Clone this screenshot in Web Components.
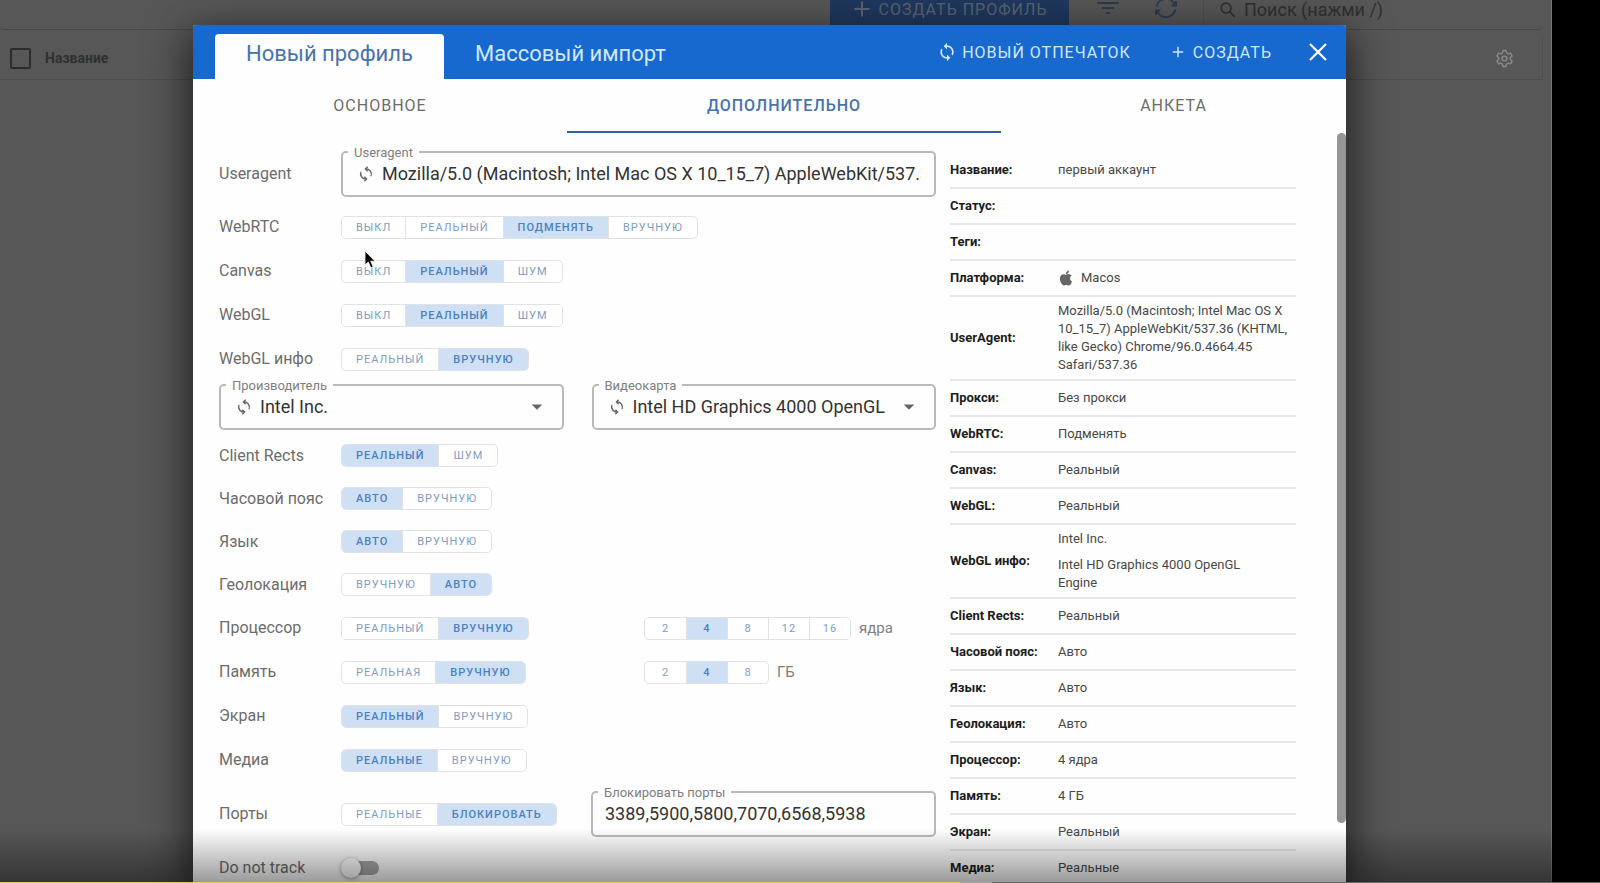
<!DOCTYPE html>
<html lang="ru">
<head>
<meta charset="utf-8">
<meta name="viewport" content="width=device-width, initial-scale=1">
<title>Новый профиль</title>
<style>
  html, body { margin: 0; height: 100%; overflow: hidden; background: #000; }
  body { font-family: Roboto, "Liberation Sans", sans-serif; font-size: 16px; color: #333; }
</style>
</head>
<body>
<profile-app></profile-app>

<script>
const define = (name, html, setup) => {
  const tpl = document.createElement('template');
  tpl.innerHTML = html;
  customElements.define(name, class extends HTMLElement {
    constructor() {
      super();
      this.attachShadow({ mode: 'open' }).append(tpl.content.cloneNode(true));
    }
    connectedCallback() {
      if (setup && !this.ready) { this.ready = true; setup(this, this.shadowRoot); }
    }
  });
};

/* Icons */
const ICONS = {
  plus: '<path d="M12 3v18M3 12h18" fill="none" stroke="currentColor" stroke-width="2.4"/>',
  close: '<path d="M4 4l16 16M20 4L4 20" fill="none" stroke="currentColor" stroke-width="2.2"/>',
  filter: '<path d="M1 7h22M6 12h12M10 17h4" fill="none" stroke="currentColor" stroke-width="2"/>',
  sync: '<path d="M12 4V1L8 5l4 4V6c3.31 0 6 2.69 6 6 0 1.01-.25 1.97-.7 2.8l1.46 1.46C19.54 15.03 20 13.57 20 12c0-4.42-3.58-8-8-8zm0 14c-3.31 0-6-2.69-6-6 0-1.01.25-1.97.7-2.8L5.24 7.74C4.46 8.97 4 10.43 4 12c0 4.42 3.58 8 8 8v3l4-4-4-4v3z" fill="currentColor"/>',
  reload: '<path d="M2.5 10.5A9.7 9.7 0 0 1 21 9M21.500 13.500A9.700 9.700 0 0 1 3 15M17.500 9.500H22V5M6.500 14.500H2V19" fill="none" stroke="currentColor" stroke-width="2"/>',
  rotate: '<path d="M11 4.500A8 8 0 0 1 19.500 15.500M13 19.500A8 8 0 0 1 4.500 8.500M14.500 1L11 4.500 14.500 8M9.500 16L13 19.500 9.500 23" fill="none" stroke="currentColor" stroke-width="2"/>',
  search: '<circle cx="10" cy="10" r="7" fill="none" stroke="currentColor" stroke-width="2.200"/><path d="M15 15l7 7" stroke="currentColor" stroke-width="2.200"/>',
  gear: '<path d="M10 2h4l.6 3 2 1.200 2.900-1 2 3.500L19.200 11v2l2.300 2.300-2 3.500-2.900-1-2 1.200-.6 3h-4l-.6-3-2-1.200-2.900 1-2-3.500L4.800 13v-2L2.500 8.700l2-3.500 2.900 1 2-1.200z" fill="none" stroke="currentColor" stroke-width="1.800" stroke-linejoin="round"/><circle cx="12" cy="12" r="3" fill="none" stroke="currentColor" stroke-width="1.800"/>',
  caret: '<path d="M5 8.500h14l-7 7z" fill="currentColor"/>',
  apple: '<path d="M18.710 19.500c-.83 1.240-1.710 2.450-3.050 2.470-1.340.030-1.770-.79-3.290-.79-1.530 0-2 .770-3.270.820-1.310.050-2.300-1.320-3.140-2.530C4.250 17 2.940 12.450 4.700 9.390c.87-1.520 2.430-2.480 4.120-2.510 1.280-.020 2.500.870 3.290.870.780 0 2.260-1.070 3.810-.91.650.030 2.470.260 3.640 1.980-.09.060-2.170 1.280-2.150 3.810.030 3.020 2.650 4.030 2.680 4.040-.030.070-.420 1.440-1.380 2.830M13 3.500c.73-.83 1.940-1.460 2.940-1.500.13 1.170-.34 2.350-1.040 3.190-.690.850-1.830 1.510-2.950 1.420-.150-1.150.410-2.350 1.050-3.110z" fill="currentColor"/>'
};
define('ui-icon', `
  <style>
    :host { display: inline-flex; flex: none; width: 16px; height: 16px; }
    svg { width: 100%; height: 100%; }
  </style>
  <svg viewBox="0 0 24 24" aria-hidden="true"></svg>`,
  (el, root) => { root.querySelector('svg').innerHTML = ICONS[el.getAttribute('name')]; });

/* Toolbar and list header under the dialog */
define('list-toolbar', `
  <style>
    :host { display: flex; align-items: flex-end; height: 29px; margin-right: 8px; color: #303030;
            border-bottom: 1px solid #484848; border-radius: 0 0 4px 4px; }
    button { border: 0; background: none; color: inherit; font: inherit; padding: 0; display: flex; align-items: center; justify-content: center; }
    .create { margin-left: auto; width: 239px; height: 40px; gap: 7px; background: #20395f; color: #5a6675; letter-spacing: 1px; }
    .create ui-icon { width: 20px; height: 20px; }
    .tools { display: flex; padding: 0 8px 0 10px; }
    .tool { width: 58px; height: 42px; color: #2c3a50; }
    .tool ui-icon { width: 24px; height: 24px; }
    label { display: flex; align-items: center; gap: 8px; height: 40px; width: 340px; box-sizing: border-box; padding-left: 15px; border-left: 1px solid #4e4e4e; }
    label ui-icon { width: 17px; height: 17px; }
    input { min-width: 0; flex: 1; border: 0; background: none; font: inherit; font-size: 18px; color: inherit; padding: 0; }
    input::placeholder { color: #303030; opacity: 1; }
  </style>
  <button class="create" type="button"><ui-icon name="plus"></ui-icon>СОЗДАТЬ ПРОФИЛЬ</button>
  <div class="tools">
    <button class="tool" type="button" aria-label="Фильтр"><ui-icon name="filter"></ui-icon></button>
    <button class="tool" type="button" aria-label="Обновить"><ui-icon name="reload"></ui-icon></button>
  </div>
  <label><ui-icon name="search"></ui-icon><input type="text" placeholder="Поиск (нажми /)" aria-label="Поиск"></label>`);

define('list-header', `
  <style>
    :host { display: flex; align-items: center; gap: 14px; height: 42px; margin: 7px 8px 0 0; padding: 0 28px 0 10px;
            border-bottom: 1px solid #4d4d4d; border-right: 1px solid #505050; color: #303030; font-size: 14px; font-weight: 700; }
    input { appearance: none; box-sizing: border-box; width: 21px; height: 21px; margin: 0; border: 2px solid #2c2c2c; border-radius: 2px; }
    label { display: contents; }
    button { margin-left: auto; border: 0; padding: 0; background: none; color: #8a8a8a; display: flex; }
    button ui-icon { width: 19px; height: 19px; }
  </style>
  <label><input type="checkbox">Название</label>
  <button type="button" aria-label="Настройки"><ui-icon name="gear"></ui-icon></button>`);

/* Segmented choice: options separated by "|", the chosen one given by value */
define('toggle-group', `
  <style>
    :host { display: inline-flex; width: max-content; }
    div { display: flex; border: 1px solid #dfe3e8; border-radius: 5px; overflow: hidden; background: #fff; }
    button { height: 21px; min-width: 41px; padding: 0 14px; border: 0; border-left: 1px solid #dfe3e8; background: none; color: #7d9dc4;
             font: inherit; font-size: 11px; line-height: 21px; letter-spacing: 1px; }
    button:first-child { border-left: 0; }
    :host([compact]) button { padding: 0 12px; }
    button[aria-pressed=true] { background: #cfe0f5; color: #4a80c4; font-weight: 500; }
  </style>
  <div role="group"></div>`,
  (el, root) => {
    const box = root.querySelector('div');
    box.setAttribute('aria-label', el.getAttribute('label') || '');
    for (const name of el.getAttribute('options').split('|')) {
      const b = document.createElement('button');
      b.type = 'button';
      b.textContent = name;
      b.setAttribute('aria-pressed', String(name === el.getAttribute('value')));
      b.addEventListener('click', () => {
        for (const o of box.children) o.setAttribute('aria-pressed', String(o === b));
      });
      box.append(b);
    }
  });

/* Outlined field with the caption set into its top border */
const fieldStyle = `
    :host { display: block; }
    .box { position: relative; display: flex; align-items: center; box-sizing: border-box; height: 46px; padding: 0 13px 0 12px;
           border: 2px solid #b9b9b9; border-radius: 5px; }
    label { position: absolute; left: 5px; top: -8px; padding: 0 6px; background: #fefefe; color: #808080; font-size: 13px; line-height: 16px; }
    .lead { margin: 0 8px 0 3px; color: #666; }
    input, select { flex: 1; min-width: 0; border: 0; padding: 0; background: none; color: #333; font: inherit; font-size: 18px; line-height: 24px; outline: 0; appearance: none; }
    .caret { width: 18px; height: 18px; margin-right: 3px; color: #666; pointer-events: none; }`;
define('text-field', `
  <style>${fieldStyle}</style>
  <div class="box"><label for="f"></label><input id="f" type="text"></div>`,
  (el, root) => {
    root.querySelector('label').textContent = el.getAttribute('label');
    root.querySelector('input').value = el.getAttribute('value');
    if (el.hasAttribute('lead')) root.querySelector('input').insertAdjacentHTML('beforebegin', '<ui-icon class="lead" name="rotate"></ui-icon>');
  });
define('select-field', `
  <style>${fieldStyle}</style>
  <div class="box"><label for="f"></label><ui-icon class="lead" name="rotate"></ui-icon><select id="f"><option></option></select><ui-icon class="caret" name="caret"></ui-icon></div>`,
  (el, root) => {
    root.querySelector('label').textContent = el.getAttribute('label');
    root.querySelector('option').textContent = el.getAttribute('value');
  });

/* Form line: caption, main control, optional second control in slot "extra" */
define('form-row', `
  <style>
    :host { display: grid; grid-template-columns: 122px 250px minmax(0, 1fr); align-items: center; min-height: 43px; }
    :host([wide]) { grid-template-columns: 122px minmax(0, 1fr); min-height: 62px; }
    :host([tall]) { min-height: 64px; }
    .name { color: #6c6c6c; line-height: 20px; }
    .extra { display: flex; align-items: center; }
  </style>
  <span class="name"></span><slot></slot><div class="extra"><slot name="extra"></slot></div>`,
  (el, root) => {
    root.querySelector('.name').textContent = el.getAttribute('label');
    if (el.hasAttribute('wide')) root.querySelector('.extra').remove();
  });

define('switch-box', `
  <style>
    :host { display: flex; }
    input { appearance: none; position: relative; width: 38px; height: 14px; margin: 0; border-radius: 7px; }
    input::before { content: ""; position: absolute; left: 8px; right: 0; top: 0; bottom: 0; border-radius: 7px; background: #a6a6a6; }
    input::after { content: ""; position: absolute; left: 0; top: -3px; width: 20px; height: 20px; border-radius: 50%; background: #fff; box-shadow: 0 1px 4px #0006; }
  </style>
  <input type="checkbox" aria-label="Do not track">`);

define('fingerprint-form', `
  <style>
    :host { display: block; }
    .roomy form-row { min-height: 44px; }
    .pair { display: grid; grid-template-columns: 1fr 1fr; gap: 28px; padding: 3px 0 4px; }
    .unit { flex: none; margin-left: 8px; color: #808080; font-size: 15px; }
    .ports { flex: none; width: 100%; }
    .shift { margin-left: 53px; }
  </style>
  <form-row wide label="Useragent"><text-field lead label="Useragent" value="Mozilla/5.0 (Macintosh; Intel Mac OS X 10_15_7) AppleWebKit/537.36 (KHTML, like Gecko) Chrome/96.0.4664.45 Safari/537.36"></text-field></form-row>
  <div class="roomy">
    <form-row label="WebRTC"><toggle-group label="WebRTC" options="ВЫКЛ|РЕАЛЬНЫЙ|ПОДМЕНЯТЬ|ВРУЧНУЮ" value="ПОДМЕНЯТЬ"></toggle-group></form-row>
    <form-row label="Canvas"><toggle-group label="Canvas" options="ВЫКЛ|РЕАЛЬНЫЙ|ШУМ" value="РЕАЛЬНЫЙ"></toggle-group></form-row>
    <form-row label="WebGL"><toggle-group label="WebGL" options="ВЫКЛ|РЕАЛЬНЫЙ|ШУМ" value="РЕАЛЬНЫЙ"></toggle-group></form-row>
    <form-row label="WebGL инфо"><toggle-group label="WebGL инфо" options="РЕАЛЬНЫЙ|ВРУЧНУЮ" value="ВРУЧНУЮ"></toggle-group></form-row>
  </div>
  <div class="pair">
    <select-field label="Производитель" value="Intel Inc."></select-field>
    <select-field label="Видеокарта" value="Intel HD Graphics 4000 OpenGL"></select-field>
  </div>
  <form-row label="Client Rects"><toggle-group label="Client Rects" options="РЕАЛЬНЫЙ|ШУМ" value="РЕАЛЬНЫЙ"></toggle-group></form-row>
  <form-row label="Часовой пояс"><toggle-group label="Часовой пояс" options="АВТО|ВРУЧНУЮ" value="АВТО"></toggle-group></form-row>
  <form-row label="Язык"><toggle-group label="Язык" options="АВТО|ВРУЧНУЮ" value="АВТО"></toggle-group></form-row>
  <form-row label="Геолокация"><toggle-group label="Геолокация" options="ВРУЧНУЮ|АВТО" value="АВТО"></toggle-group></form-row>
  <div class="roomy">
    <form-row label="Процессор"><toggle-group label="Процессор" options="РЕАЛЬНЫЙ|ВРУЧНУЮ" value="ВРУЧНУЮ"></toggle-group>
      <toggle-group compact slot="extra" class="shift" label="Ядра" options="2|4|8|12|16" value="4"></toggle-group><span slot="extra" class="unit">ядра</span></form-row>
    <form-row label="Память"><toggle-group label="Память" options="РЕАЛЬНАЯ|ВРУЧНУЮ" value="ВРУЧНУЮ"></toggle-group>
      <toggle-group compact slot="extra" class="shift" label="Объём памяти" options="2|4|8" value="4"></toggle-group><span slot="extra" class="unit">ГБ</span></form-row>
    <form-row label="Экран"><toggle-group label="Экран" options="РЕАЛЬНЫЙ|ВРУЧНУЮ" value="РЕАЛЬНЫЙ"></toggle-group></form-row>
    <form-row label="Медиа"><toggle-group label="Медиа" options="РЕАЛЬНЫЕ|ВРУЧНУЮ" value="РЕАЛЬНЫЕ"></toggle-group></form-row>
  </div>
  <form-row tall label="Порты"><toggle-group label="Порты" options="РЕАЛЬНЫЕ|БЛОКИРОВАТЬ" value="БЛОКИРОВАТЬ"></toggle-group>
    <text-field slot="extra" class="ports" label="Блокировать порты" value="3389,5900,5800,7070,6568,5938"></text-field></form-row>
  <form-row label="Do not track"><switch-box></switch-box></form-row>`);

/* Read-only overview of the profile */
const SUMMARY = [
  ['Название', 'первый аккаунт'], ['Статус', ''], ['Теги', ''],
  ['Платформа', '<span class="os"><ui-icon name="apple"></ui-icon>Macos</span>'],
  ['UserAgent', 'Mozilla/5.0 (Macintosh; Intel Mac OS X 10_15_7) AppleWebKit/537.36 (KHTML, like Gecko) Chrome/96.0.4664.45 Safari/537.36'],
  ['Прокси', 'Без прокси'], ['WebRTC', 'Подменять'], ['Canvas', 'Реальный'], ['WebGL', 'Реальный'],
  ['WebGL инфо', '<p>Intel Inc.</p><p>Intel HD Graphics 4000 OpenGL Engine</p>'],
  ['Client Rects', 'Реальный'], ['Часовой пояс', 'Авто'], ['Язык', 'Авто'], ['Геолокация', 'Авто'],
  ['Процессор', '4 ядра'], ['Память', '4 ГБ'], ['Экран', 'Реальный'], ['Медиа', 'Реальные']
];
define('profile-summary', `
  <style>
    :host { display: block; }
    table { width: 100%; border-spacing: 0; table-layout: fixed; font-size: 13px; line-height: 18px; }
    th, td { box-sizing: border-box; height: 36px; padding: 5px 0; border-bottom: 2px solid #e8e8e8; text-align: left; vertical-align: middle; }
    th { width: 108px; font-weight: 700; color: #1c1c1c; white-space: nowrap; }
    td { color: #484848; }
    p { margin: 0 0 8px; }
    p:last-child { margin: 0; padding-right: 40px; }
    .os { display: flex; align-items: center; gap: 6px; }
    .os ui-icon { width: 18px; height: 18px; margin-left: -1px; color: #666; }
  </style>
  <table><tbody>${SUMMARY.map(([k, v]) => `<tr><th scope="row">${k}:</th><td>${v}</td></tr>`).join('')}</tbody></table>`);

/* Dialog */
define('dialog-header', `
  <style>
    :host { display: flex; align-items: flex-end; height: 54px; padding: 0 16px 0 22px; background: #1769cf; color: #d0e8ff; border-radius: 3px 3px 0 0; }
    button { border: 0; background: none; color: inherit; font: inherit; padding: 0; }
    .tab { height: 45px; padding: 0 31px 5px; font-size: 22px; line-height: 40px; }
    .tab[aria-selected=true] { background: #fefefe; color: #4673ad; border-radius: 4px 4px 0 0; }
    nav { display: flex; }
    .actions { display: flex; align-items: center; height: 54px; }
    .actions { margin-left: auto; }
    .act { display: flex; align-items: center; gap: 5px; margin-right: 40px; letter-spacing: 1px; }
    .act + .act { gap: 8px; margin-right: 34px; }
    .act ui-icon[name=sync] { width: 20px; height: 20px; }
    .act ui-icon[name=plus] { width: 14px; height: 14px; }
    .close { color: #fff; display: flex; }
    .close ui-icon { width: 24px; height: 24px; }
  </style>
  <nav role="tablist">
    <button class="tab" type="button" role="tab" aria-selected="true">Новый профиль</button>
    <button class="tab" type="button" role="tab" aria-selected="false">Массовый импорт</button>
  </nav>
  <div class="actions">
    <button class="act" type="button"><ui-icon name="sync"></ui-icon>НОВЫЙ ОТПЕЧАТОК</button>
    <button class="act" type="button"><ui-icon name="plus"></ui-icon>СОЗДАТЬ</button>
    <button class="close" type="button" aria-label="Закрыть"><ui-icon name="close"></ui-icon></button>
  </div>`);

define('section-tabs', `
  <style>
    :host { display: grid; grid-template-columns: 374fr 434fr 345fr; height: 54px; }
    button { border: 0; border-bottom: 2px solid transparent; padding: 0; background: none; color: #6c6c6c; font: inherit; letter-spacing: 1px; }
    button[aria-selected=true] { border-color: #2f62a3; color: #4673ad; font-weight: 500; }
  </style>
  <button type="button" role="tab" aria-selected="false">ОСНОВНОЕ</button>
  <button type="button" role="tab" aria-selected="true">ДОПОЛНИТЕЛЬНО</button>
  <button type="button" role="tab" aria-selected="false">АНКЕТА</button>`);

define('profile-dialog', `
  <style>
    :host { display: flex; flex-direction: column; min-width: 0; background: #fefefe; box-shadow: 0 12px 40px 6px #0009; border-radius: 3px 3px 0 0; }
    .body { position: relative; flex: 1; min-height: 0; overflow: hidden; display: grid; grid-template-columns: minmax(0, 717fr) minmax(0, 346fr);
            column-gap: 14px; align-items: start; padding: 10px 50px 0 26px; }
    profile-summary { margin-top: 10px; }
    .thumb { position: absolute; right: 0; top: 0; width: 9px; height: 92%; border-radius: 5px; background: #959595; }
  </style>
  <dialog-header></dialog-header>
  <section-tabs></section-tabs>
  <div class="body">
    <fingerprint-form></fingerprint-form>
    <profile-summary></profile-summary>
    <div class="thumb"></div>
  </div>`);

define('profile-app', `
  <style>
    :host { display: block; position: relative; height: 100vh; overflow: hidden; }
    .page { box-sizing: border-box; height: 100%; margin-right: 48px; background: #575757; border-right: 1px solid #777; }
    .layer { position: absolute; inset: 25px 49px 0 0; display: grid; grid-template-columns: 193fr 1153fr 205fr; grid-template-rows: minmax(0, 1fr); }
    profile-dialog { grid-column: 2; }
    .cursor { position: absolute; left: 364px; top: 250px; width: 12px; height: 19px; }
    .player { position: absolute; inset: auto 0 0 0; height: 54px; background: linear-gradient(#0000, #0006); pointer-events: none; }
    .progress { position: absolute; inset: auto 0 0 0; height: 1px; background: linear-gradient(90deg, #e5c75a 60%, #a5a5a5 60% 62%, #666 62%); }
  </style>
  <div class="page"><list-toolbar></list-toolbar><list-header></list-header></div>
  <div class="layer"><profile-dialog></profile-dialog></div>
  <svg class="cursor" viewBox="0 0 12 19" aria-hidden="true"><path d="M1 1v14l3.300-3 2.500 5.800 2.400-1-2.500-5.600H11z" fill="#000" stroke="#fff" stroke-width=".8"/></svg>
  <div class="player"><div class="progress"></div></div>`);
</script>
</body>
</html>
